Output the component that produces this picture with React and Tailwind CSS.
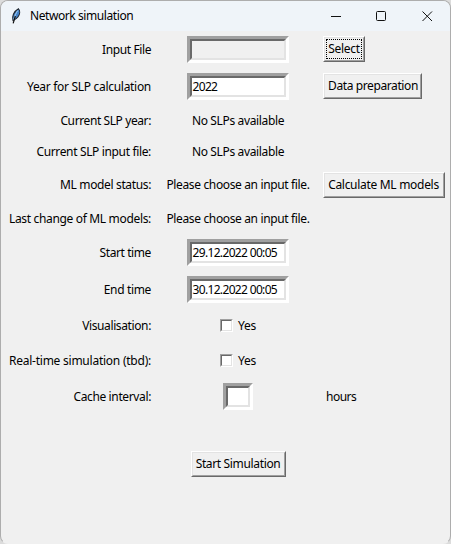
import React from "react";

const Entry = ({ value = "", disabled = false, width = "w-[102px]" }) => (
  <div
    className={`${width} h-[27px] border-[3px] border-t-[#a0a0a0] border-l-[#a0a0a0] border-b-white border-r-white`}
  >
    <div
      className={`flex h-full items-center border-2 border-t-[#696969] border-l-[#696969] border-b-[#e3e3e3] border-r-[#e3e3e3] pl-px tracking-[-0.66px] ${
        disabled ? "bg-[#f0f0f0]" : "bg-white"
      }`}
    >
      {value}
    </div>
  </div>
);

const Button = ({ children, width, focused = false }) => (
  <div
    className={`${width} h-[26px] border border-t-white border-l-white border-b-[#696969] border-r-[#696969]`}
  >
    <div className="h-full border border-t-[#e3e3e3] border-l-[#e3e3e3] border-b-[#a0a0a0] border-r-[#a0a0a0] p-px">
      <div
        className={`flex h-full items-center justify-center border ${
          focused ? "border-dotted border-black" : "border-transparent"
        }`}
      >
        {children}
      </div>
    </div>
  </div>
);

const Check = () => (
  <div className="flex w-[35px] items-center gap-[5px]">
    <div className="size-[13px] shrink-0 border border-t-[#a0a0a0] border-l-[#a0a0a0] border-b-white border-r-white">
      <div className="h-full border border-t-[#696969] border-l-[#696969] border-b-[#e3e3e3] border-r-[#e3e3e3] bg-white" />
    </div>
    <span className="tracking-[-0.2px]">Yes</span>
  </div>
);

const Row = ({ label, labelClass = "", height, children, action }) => (
  <div className={`grid grid-cols-[151px_171px_1fr] items-center ${height}`}>
    <div className="flex justify-end pr-px">
      <span className={labelClass}>{label}</span>
    </div>
    <div className="flex justify-center">{children}</div>
    <div>{action}</div>
  </div>
);

const Status = ({ children }) => (
  <span className="pl-px tracking-[-0.36px]">{children}</span>
);

const Feather = () => (
  <svg width="10" height="16" viewBox="0 0 10 16" className="block">
    <path d="M2 12.5C.8 8.5 2.5 3.500 7.500.8c1.900 2 1.400 5.600-.6 8.200C5.700 10.500 4 11.800 2 12.500Z" fill="#4382c8" stroke="#20262e" strokeWidth="1.100" />
    <path d="M6.800 2.500C5 5 3.700 8 2.700 11.500" stroke="#a8d4f4" strokeWidth="1" fill="none" />
    <path d="M4.300 8L2.200 15.300" stroke="#111" strokeWidth="1.200" fill="none" />
  </svg>
);

export default function App() {
  return (
    <div className="h-[544px] w-[451px] overflow-hidden bg-[#dcdcdc]">
      <div className="h-full overflow-hidden rounded-[8px] border border-[#adadad] border-b-transparent bg-[#f0f0f0] font-['Noto_Sans','Open_Sans',sans-serif] text-[12px] leading-[16px] tracking-[-0.3px] whitespace-nowrap text-black">
        <div className="flex h-[30px] items-center bg-[#eff4f9] pl-[10px]">
          <Feather />
          <span className="flex-1 pl-[9px] tracking-[-0.42px]">Network simulation</span>
          <svg width="104" height="12" viewBox="0 0 104 12" className="mr-[15px]" fill="none" stroke="#111" strokeWidth="1">
            <path d="M0 6.500H10" />
            <rect x="45.500" y="1.500" width="9" height="9" rx="1" />
            <path d="M91.500 1.500L101 11M101 1.500L91.500 11" />
          </svg>
        </div>
        <Row label="Input File" labelClass="tracking-[-0.4px]" height="h-[37px]" action={<div className="pb-px"><Button width="w-[42px]" focused>Select</Button></div>}>
          <Entry disabled />
        </Row>
        <Row label="Year for SLP calculation" height="h-[37px]" action={<div className="pb-px"><Button width="w-[99px]"><span className="pl-px tracking-[-0.4px]">Data preparation</span></Button></div>}>
          <Entry value="2022" />
        </Row>
        <Row label="Current SLP year:" labelClass="tracking-[-0.4px]" height="h-[31px]"><Status>No SLPs available</Status></Row>
        <Row label="Current SLP input file:" labelClass="tracking-[-0.35px]" height="h-[31px]"><Status>No SLPs available</Status></Row>
        <Row label="ML model status:" labelClass="tracking-[-0.36px]" height="h-[36px]" action={<Button width="w-[122px]"><span className="pr-px">Calculate ML models</span></Button>}>
          <Status>Please choose an input file.</Status>
        </Row>
        <Row label="Last change of ML models:" labelClass="tracking-[-0.33px]" height="h-[31px]"><Status>Please choose an input file.</Status></Row>
        <Row label="Start time" labelClass="tracking-[-0.4px]" height="h-[37px]"><Entry value="29.12.2022 00:05" /></Row>
        <Row label="End time" labelClass="tracking-[-0.35px]" height="h-[37px]"><Entry value="30.12.2022 00:05" /></Row>
        <Row label="Visualisation:" labelClass="tracking-[-0.38px]" height="h-[35px]"><Check /></Row>
        <Row label="Real-time simulation (tbd):" labelClass="tracking-[-0.24px]" height="h-[35px]"><Check /></Row>
        <Row label="Cache interval:" labelClass="tracking-[-0.37px]" height="h-[37px]" action={<div className="pt-px pl-[3px] tracking-[-0.5px]">hours</div>}>
          <Entry width="w-[30px]" />
        </Row>
        <div className="pt-[36px] pl-[190px]">
          <Button width="w-[95px]"><span className="pr-px tracking-[-0.35px]">Start Simulation</span></Button>
        </div>
      </div>
    </div>
  );
}
